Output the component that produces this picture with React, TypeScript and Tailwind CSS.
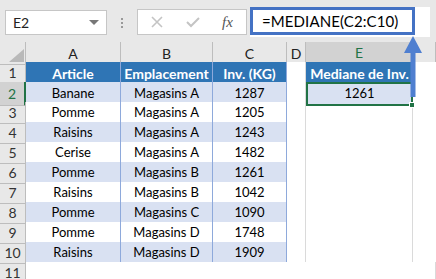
import React from "react";

const rows = [
  ["Banane", "Magasins A", "1287"],
  ["Pomme", "Magasins A", "1205"],
  ["Raisins", "Magasins A", "1243"],
  ["Cerise", "Magasins A", "1482"],
  ["Pomme", "Magasins B", "1261"],
  ["Raisins", "Magasins B", "1042"],
  ["Pomme", "Magasins C", "1090"],
  ["Pomme", "Magasins D", "1748"],
  ["Raisins", "Magasins D", "1909"],
];

const cols = ["A", "B", "C", "D", "E", ""];

const gridCols = "grid grid-cols-[26px_95px_92px_74px_19px_107px_1fr]";

const App: React.FC = () => {
  return (
    <div
      className="relative w-[436px] h-[279px] overflow-hidden bg-[#e8e8e8] text-black"
      style={{ fontFamily: "Lato, 'Liberation Sans', sans-serif" }}
    >
      {/* formula bar */}
      <div className="flex items-start h-[42px] pt-[10px]">
        <div className="ml-[5px] w-[102px] h-[25px] bg-white border border-[#c6c6c6] flex items-center justify-between px-[7px] text-[14px] text-[#222]">
          <span>E2</span>
          <span className="w-0 h-0 border-l-[5px] border-r-[5px] border-t-[5px] border-l-transparent border-r-transparent border-t-[#777]" />
        </div>
        <div className="w-[30px] h-[25px] flex flex-col items-center justify-center gap-[2px]">
          <span className="w-[2px] h-[2px] bg-[#999]" />
          <span className="w-[2px] h-[2px] bg-[#999]" />
          <span className="w-[2px] h-[2px] bg-[#999]" />
        </div>
        <div className="-mt-[1px] w-[110px] h-[26px] bg-white border border-[#c6c6c6] flex items-center">
          <svg width="12" height="12" viewBox="0 0 12 12" className="ml-[13px]">
            <path d="M1 1 L11 11 M11 1 L1 11" stroke="#c4c4c4" strokeWidth="1.6" />
          </svg>
          <svg width="14" height="12" viewBox="0 0 14 12" className="ml-[23px]">
            <path d="M1 6 L5 10 L13 2" stroke="#c4c4c4" strokeWidth="2" fill="none" />
          </svg>
          <span
            className="ml-[22px] text-[15px] italic text-[#555]"
            style={{ fontFamily: "'Liberation Serif', serif" }}
          >
            fx
          </span>
        </div>
        <div className="ml-[3px] -mt-[3px] w-[180px] h-[30px] bg-white flex items-start">
          <div className="w-[165px] h-[28px] border-[3px] border-[#4472c4] flex items-center pl-[9px] text-[15px] tracking-[0.1px]">
            =MEDIANE(C2:C10)
          </div>
        </div>
      </div>

      {/* column headers */}
      <div className={`${gridCols} h-[20px] text-[14px] text-[#222]`}>
        <div className="relative border-r border-b border-[#bdbdbd]">
          <svg width="15" height="13" viewBox="0 0 15 13" className="absolute right-[1px] bottom-[2px]">
            <path d="M15 0 L15 13 L0 13 Z" fill="#b9b9b9" />
          </svg>
        </div>
        {cols.map((c) => (
          <div
            key={c || "f"}
            className={
              c === "E"
                ? "flex items-center justify-center bg-[#d2d2d2] border-r border-[#bdbdbd] border-b-2 border-b-[#217346] text-[#217346]"
                : "flex items-center justify-center border-r border-b border-[#bdbdbd]"
            }
          >
            {c}
          </div>
        ))}
      </div>

      {/* header row 1 */}
      <div className={`${gridCols} h-[20px] text-[14px]`}>
        <div className="flex items-center justify-center border-r border-b border-[#bdbdbd] text-[14px] text-[#333]">1</div>
        {["Article", "Emplacement", "Inv. (KG)"].map((h) => (
          <div key={h} className="flex items-center justify-center bg-[#2f75b5] border-r border-[#8ea9db] font-bold text-white">
            {h}
          </div>
        ))}
        <div className="border-r border-b border-[#dadada] bg-white" />
        <div className="flex items-center justify-center bg-[#2f75b5] font-bold text-white whitespace-nowrap overflow-hidden">
          Mediane de Inv.
        </div>
        <div className="border-b border-[#dadada] bg-white" />
      </div>

      {/* data rows */}
      {rows.map((r, i) => {
        const band = i % 2 === 0 ? "bg-[#d9e1f2]" : "bg-white";
        const sel = i === 0;
        return (
          <div key={i} className={`${gridCols} h-[20px] text-[13px]`}>
            <div
              className={
                sel
                  ? "flex items-center justify-center bg-[#d2d2d2] border-b border-[#bdbdbd] border-r-2 border-r-[#217346] text-[14px] text-[#217346]"
                  : "flex items-center justify-center border-r border-b border-[#bdbdbd] text-[14px] text-[#333]"
              }
            >
              {i + 2}
            </div>
            {r.map((v, j) => (
              <div
                key={j}
                className={`flex items-center justify-center border-r border-b border-[#8ea9db] ${band}`}
              >
                {v}
              </div>
            ))}
            <div className="border-r border-b border-[#dadada] bg-white" />
            {sel ? (
              <div className="relative flex items-center justify-center bg-[#d9e1f2] border-2 border-[#217346]">
                1261
                <span className="absolute -right-[4px] -bottom-[4px] w-[6px] h-[6px] bg-[#217346] border border-white" />
              </div>
            ) : (
              <div className="border-r border-b border-[#dadada] bg-white" />
            )}
            <div className="border-b border-[#dadada] bg-white" />
          </div>
        );
      })}

      {/* row 11 */}
      <div className={`${gridCols} h-[20px] text-[14px]`}>
        <div className="flex items-center justify-center border-r border-[#bdbdbd] text-[#333]">11</div>
        <div className="col-span-6 bg-white border-r border-[#dadada]" />
      </div>

      {/* arrow from formula to E2 */}
      <svg
        width="20"
        height="64"
        viewBox="0 0 20 64"
        className="absolute left-[403px] top-[36px]"
      >
        <path d="M10 0 L19 17 L12.5 17 L12.5 61 L7.5 61 L7.5 17 L1 17 Z" fill="#4f7fd0" />
      </svg>
    </div>
  );
};

export default App;
